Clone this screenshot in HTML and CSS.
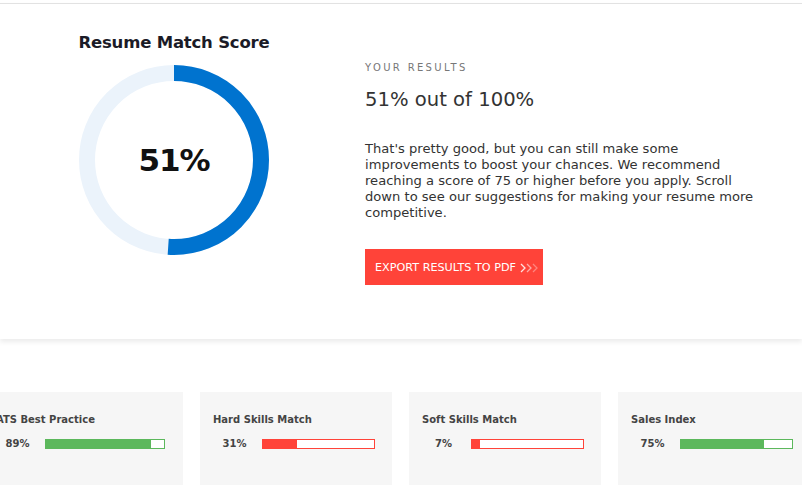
FILE: index.html
```html
<!DOCTYPE html>
<html>
<head>
<meta charset="utf-8">
<link rel="stylesheet" href="styles.css">
</head>
<body>
<section class="summary">
  <div class="score-col">
    <h2 class="score-title">Resume Match Score</h2>
    <div class="ring">
      <svg width="192" height="192" viewBox="0 0 192 192">
        <circle cx="96" cy="96" r="87" fill="none" stroke="#ebf3fb" stroke-width="16"/>
        <circle cx="96" cy="96" r="87" fill="none" stroke="#0073cf" stroke-width="16" stroke-dasharray="278.8 546.6" transform="rotate(-90 96 96)"/>
      </svg>
      <span class="ring-value">51%</span>
    </div>
  </div>
  <div class="results-col">
    <div class="eyebrow">YOUR RESULTS</div>
    <div class="headline">51% out of 100%</div>
    <p class="desc">That's pretty good, but you can still make some improvements to boost your chances. We recommend reaching a score of 75 or higher before you apply. Scroll down to see our suggestions for making your resume more competitive.</p>
    <button class="export"><span>EXPORT RESULTS TO PDF</span><svg class="chevs" width="18" height="10" viewBox="0 0 18 10"><path d="M1 1l4 4-4 4" fill="none" stroke="rgba(255,255,255,0.85)" stroke-width="1.3"/><path d="M7 1l4 4-4 4" fill="none" stroke="rgba(255,255,255,0.55)" stroke-width="1.3"/><path d="M13 1l4 4-4 4" fill="none" stroke="rgba(255,255,255,0.35)" stroke-width="1.3"/></svg></button>
  </div>
</section>
<section class="metrics">
  <div class="metric first">
    <div class="metric-title">ATS Best Practice</div>
    <div class="metric-row"><span class="pct">89%</span><div class="bar good"><div class="fill" style="width:89%"></div></div></div>
  </div>
  <div class="metric">
    <div class="metric-title">Hard Skills Match</div>
    <div class="metric-row"><span class="pct">31%</span><div class="bar bad"><div class="fill" style="width:31%"></div></div></div>
  </div>
  <div class="metric">
    <div class="metric-title">Soft Skills Match</div>
    <div class="metric-row"><span class="pct">7%</span><div class="bar bad"><div class="fill" style="width:7%"></div></div></div>
  </div>
  <div class="metric">
    <div class="metric-title">Sales Index</div>
    <div class="metric-row"><span class="pct">75%</span><div class="bar good"><div class="fill" style="width:75%"></div></div></div>
  </div>
</section>
</body>
</html>
```
FILE: styles.css
```css
html, body {
  margin: 0;
  padding: 0;
  background: #fff;
  overflow: hidden;
}
body {
  font-family: "DejaVu Sans", "Noto Sans", sans-serif;
  color: #333;
  width: 802px;
  height: 490px;
}
.summary {
  margin-top: 3px;
  height: 336px;
  border-top: 1px solid #e2e2e2;
  box-shadow: 0 3px 5px rgba(0, 0, 0, 0.08);
  display: flex;
  padding-left: 78px;
  box-sizing: border-box;
}
.score-col {
  width: 192px;
  display: flex;
  flex-direction: column;
  align-items: center;
}
.score-title {
  margin: 29px 0 0 0;
  font-size: 16.5px;
  font-weight: 700;
  color: #1b1b27;
  line-height: 20px;
  letter-spacing: -0.2px;
  white-space: nowrap;
}
.ring {
  position: relative;
  width: 192px;
  height: 192px;
  margin-top: 11px;
}
.ring svg {
  display: block;
}
.ring-value {
  position: absolute;
  inset: 0;
  display: flex;
  align-items: center;
  justify-content: center;
  font-size: 31px;
  font-weight: 700;
  color: #111;
  letter-spacing: -1px;
}
.results-col {
  margin-left: 95px;
  width: 400px;
}
.eyebrow {
  margin-top: 57px;
  font-size: 10px;
  letter-spacing: 2.35px;
  color: #777;
  line-height: 14px;
}
.headline {
  margin-top: 13px;
  font-size: 19.6px;
  color: #333;
  line-height: 24px;
}
.desc {
  margin: 29px 0 0 0;
  font-size: 13.1px;
  line-height: 16px;
  color: #333;
}
.export {
  margin-top: 28px;
  height: 36px;
  width: 178px;
  padding: 0 0 0 10px;
  display: flex;
  align-items: center;
  gap: 4px;
  border: none;
  background: #ff4339;
  color: #fff;
  font-family: inherit;
  font-size: 11.2px;
  white-space: nowrap;
}
.chevs {
  display: block;
  margin-top: 1px;
}
.metrics {
  margin-top: 53px;
  margin-left: -17px;
  display: flex;
  gap: 17px;
}
.metric {
  flex: 0 0 192px;
  height: 93px;
  background: #f6f6f6;
  padding: 21px 0 0 13px;
  box-sizing: border-box;
}
.metric.first {
  flex-basis: 200px;
}
.metric.first .bar {
  width: 120px;
}
.metric-title {
  font-size: 10px;
  font-weight: 700;
  color: #444;
  line-height: 14px;
  white-space: nowrap;
}
.metric-row {
  display: flex;
  align-items: center;
  margin-top: 11px;
}
.pct {
  width: 43px;
  text-align: center;
  font-size: 10px;
  font-weight: 700;
  color: #444;
}
.bar {
  margin-left: 6px;
  width: 113px;
  height: 10px;
  box-sizing: border-box;
  border: 1px solid;
  background: #fff;
}
.bar .fill { height: 100%; }
.bar.good { border-color: #5cb85c; }
.bar.good .fill { background: #5cb85c; }
.bar.bad { border-color: #ff4339; }
.bar.bad .fill { background: #ff4339; }
```
